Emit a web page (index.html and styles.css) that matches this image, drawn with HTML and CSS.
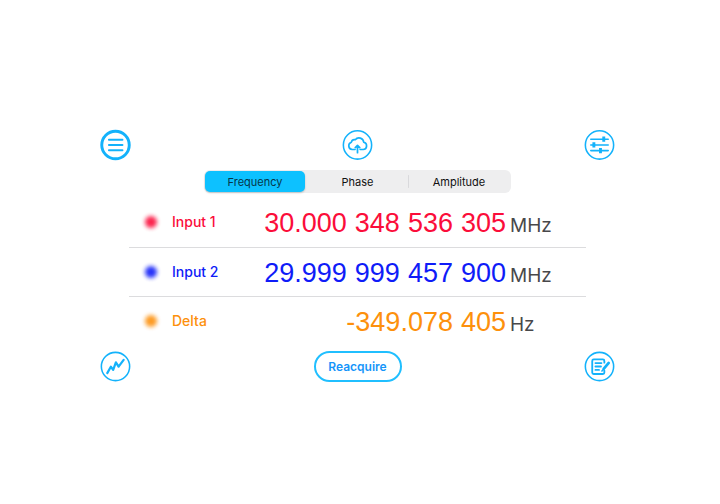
FILE: index.html
```html
<!DOCTYPE html>
<html lang="en">
<head>
<meta charset="utf-8">
<meta name="viewport" content="width=device-width, initial-scale=1">
<title>Frequency</title>
<link rel="stylesheet" href="styles.css">
</head>
<body>
<main class="app">
  <header class="bar">
    <button class="round" type="button" aria-label="Menu">
      <svg viewBox="0 0 32 32"><circle cx="16" cy="16.5" r="14.2" stroke-width="3"/><path d="M9.200 11h14M9.200 16.500h14M9.200 22h14" stroke-width="2"/></svg>
    </button>
    <button class="round" type="button" aria-label="Upload">
      <svg viewBox="0 0 32 32"><circle cx="16" cy="16.5" r="14.6"/><path d="M13.500 21.200H10.500a3.900 3.900 0 0 1-.8-7.600 3.400 3.400 0 0 1 4-2.600 4.900 4.900 0 0 1 8.700 2.700 3.800 3.800 0 0 1-.5 7.500h-3.200" stroke-width="1.700"/><path d="M16 24.500v-7.200M13.700 19.200l2.300-2.300 2.300 2.300" stroke-width="1.800"/></svg>
    </button>
    <button class="round" type="button" aria-label="Settings">
      <svg viewBox="0 0 32 32"><circle cx="16" cy="16.5" r="14.6"/><path d="M7 10.500h18M7 16.500h18M7 22.300h18"/><path d="M20.400 7.800v5.400M10.200 13.800v5.400M17 19.600v5.400" stroke-width="3" stroke-linecap="butt"/></svg>
    </button>
  </header>

  <div class="tabs" role="group" aria-label="Measurement">
    <button class="tab active" type="button" aria-pressed="true">Frequency</button>
    <button class="tab" type="button" aria-pressed="false">Phase</button>
    <button class="tab divided" type="button" aria-pressed="false">Amplitude</button>
  </div>

  <section class="readings">
    <div class="reading red">
      <span class="dot"></span><span class="name">Input 1</span>
      <span class="value"><span>30.000</span> <span>348</span> <span>536</span> <span>305</span></span>
      <span class="unit">MHz</span>
    </div>
    <div class="reading blue">
      <span class="dot"></span><span class="name">Input 2</span>
      <span class="value"><span>29.999</span> <span>999</span> <span>457</span> <span>900</span></span>
      <span class="unit">MHz</span>
    </div>
    <div class="reading orange">
      <span class="dot"></span><span class="name">Delta</span>
      <span class="value"><span>-349.078</span> <span>405</span></span>
      <span class="unit">Hz</span>
    </div>
  </section>

  <footer class="bar">
    <button class="round" type="button" aria-label="Graph">
      <svg viewBox="0 0 32 32"><circle cx="16" cy="16" r="14.6"/><path d="M7.500 22.800l3.700-6.500 2.400 3.200 2.800-7.800 2.800 4.500 5.200-7" stroke-width="2.300"/></svg>
    </button>
    <button class="reacquire" type="button">Reacquire</button>
    <button class="round" type="button" aria-label="Notes">
      <svg viewBox="0 0 32 32"><circle cx="16" cy="16" r="14.6"/><path d="M21 12V10.200a1.500 1.500 0 0 0-1.500-1.500h-9.500a1.500 1.500 0 0 0-1.500 1.500v12a1.500 1.500 0 0 0 1.500 1.500h9.500a1.500 1.500 0 0 0 1.500-1.500v-2M11.800 12.500h6.200M11.800 16h5.700M11.800 19.500h3.700" stroke-width="1.900"/><path d="M20.300 18.500l5.200-6.200" stroke-width="2.800"/><path d="M18.500 20.700l1-1.200"/></svg>
    </button>
  </footer>
</main>
</body>
</html>
```

FILE: styles.css
```css
* {
  box-sizing: border-box;
}

body {
  margin: 0;
  background: #fff;
  font-family: Inter, "Liberation Sans", sans-serif;
}

button {
  padding: 0;
  border: 0;
  background: none;
  font: inherit;
  cursor: pointer;
}

.app {
  display: flex;
  flex-direction: column;
  padding: 129px 105px 24px 100px;
}

.bar {
  display: grid;
  grid-template-columns: 1fr auto 1fr;
  align-items: center;
}

.bar > :last-child {
  justify-self: end;
}

.round {
  width: 31px;
  height: 31px;
}

.round svg {
  display: block;
  width: 100%;
  overflow: visible;
  fill: none;
  stroke: #13b2fb;
  stroke-width: 1.6;
  stroke-linecap: round;
  stroke-linejoin: round;
}

.tabs {
  display: grid;
  grid-template-columns: repeat(3, 1fr);
  width: 59.5%;
  height: 23px;
  margin: 10px auto 5px;
  padding: 1px;
  border-radius: 6px;
  background: #eeeeef;
  font-size: 11px;
}

.tab {
  color: #111;
  border-radius: 5px;
}

.tab.active {
  margin-right: 2px;
  background: #0dc1ff;
  color: #06364a;
  box-shadow: 0 1px 2px #0003;
}

.divided {
  background: linear-gradient(#d9d9dc, #d9d9dc) left center / 1px 13px no-repeat;
}

.readings {
  margin: 0 29px;
}

.reading {
  display: grid;
  grid-template-columns: 14px 70px 1fr 80px;
  grid-template-rows: 48px;
  align-items: baseline;
  height: 49px;
  padding-left: 16px;
  line-height: 51px;
}

.reading + .reading {
  border-top: 1px solid #dcdcde;
}

.red {
  color: #fb0d3a;
}

.blue {
  color: #0f1cf8;
}

.orange {
  color: #fd900c;
}

.dot {
  width: 12px;
  height: 12px;
  align-self: center;
  border-radius: 50%;
  background: currentColor;
  filter: blur(2px);
  opacity: 0.9;
}

.name {
  align-self: center;
  padding-left: 13px;
  font-size: 14px;
  font-weight: 500;
  line-height: 20px;
  white-space: nowrap;
}

.value {
  display: flex;
  justify-content: flex-end;
  gap: 8px;
  font-family: "Liberation Sans", Arial, sans-serif;
  font-size: 27px;
}

.unit {
  padding-left: 4px;
  color: #48484a;
  font-size: 19px;
}

footer.bar {
  margin-top: 6px;
}

.reacquire {
  width: 88px;
  height: 31px;
  border: 2px solid #20bfff;
  border-radius: 16px;
  color: #1595fa;
  font-size: 12px;
  font-weight: 600;
}
```
